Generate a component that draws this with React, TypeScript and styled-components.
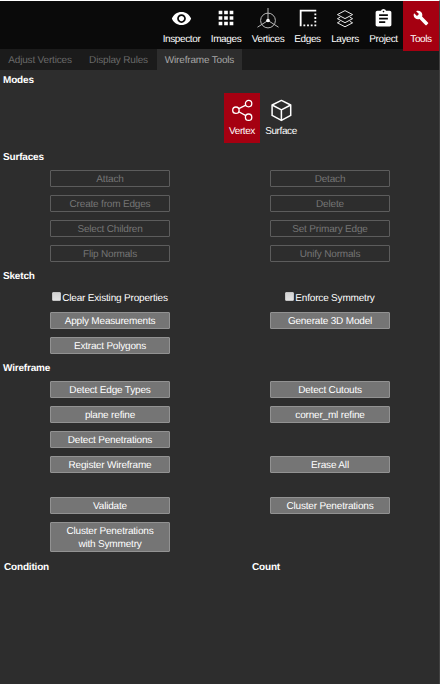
import React from 'react';
import styled, { createGlobalStyle } from 'styled-components';
import { MdVisibility, MdApps, MdBorderStyle, MdAssignment, MdBuild } from 'react-icons/md';

const GlobalStyle = createGlobalStyle`
  * { box-sizing: border-box; }
  body {
    margin: 0;
    background: #2d2d2d;
    font-family: "Liberation Sans", Arial, sans-serif;
    font-size: 10px;
    letter-spacing: -0.18px;
    color: #fff;
    text-rendering: geometricPrecision;
  }
`;

const Panel = styled.div`
  width: 440px;
  height: 684px;
  overflow: hidden;
  background: #2d2d2d;
  border-top: 1px solid #fff;
  border-right: 1px solid #414141;
`;

const NavBar = styled.nav`
  display: flex;
  justify-content: flex-end;
  height: 48px;
  background: #0a0a0a;
`;

const NavItem = styled.div<{ $width: number; $active?: boolean }>`
  display: flex;
  flex-direction: column;
  align-items: center;
  width: ${p => p.$width}px;
  height: ${p => (p.$active ? 50 : 48)}px;
  background: ${p => (p.$active ? '#a50011' : 'transparent')};
  z-index: 1;
`;

const NavIcon = styled.div`
  display: flex;
  align-items: center;
  justify-content: center;
  height: 24px;
  margin-top: 5px;
`;

const NavLabel = styled.span`
  margin-top: 3px;
  line-height: 13px;
  white-space: nowrap;
  letter-spacing: -0.38px;
`;

const TabBar = styled.div`
  display: flex;
  height: 21px;
  background: #1b1b1b;
`;

const Tab = styled.div<{ $width: number; $active?: boolean }>`
  width: ${p => p.$width}px;
  height: 21px;
  line-height: 23px;
  text-align: center;
  white-space: nowrap;
  color: ${p => (p.$active ? '#a6a6a6' : '#696969')};
  background: ${p => (p.$active ? '#2d2d2d' : 'transparent')};
`;

const Heading = styled.h2`
  height: 19px;
  margin: 0;
  padding-left: 3px;
  font-size: 10px;
  line-height: 21px;
  font-weight: bold;
`;

const Modes = styled.div`
  display: flex;
  gap: 3px;
  height: 58px;
  padding: 4px 0 4px 224px;
`;

const Mode = styled.div<{ $active?: boolean }>`
  display: flex;
  flex-direction: column;
  align-items: center;
  width: 36px;
  height: 50px;
  padding-top: 5px;
  background: ${p => (p.$active ? '#a50011' : 'transparent')};
`;

const ModeLabel = styled.span`
  margin-top: 3px;
  line-height: 13px;
  letter-spacing: -0.4px;
`;

const Grid = styled.div<{ $gapTop?: number }>`
  display: grid;
  grid-template-columns: 220px 220px;
  width: 440px;
  padding-top: ${p => p.$gapTop ?? 0}px;
`;

const Cell = styled.div`
  display: flex;
  justify-content: center;
  min-height: 25px;
  padding: 4px 0;
`;

const Button = styled.button<{ $tall?: boolean }>`
  width: 120px;
  height: ${p => (p.$tall ? 30 : 17)}px;
  margin: 0;
  padding: ${p => (p.$tall ? 1 : 2)}px 10px 0;
  border: 1px solid #929292;
  border-radius: 1px;
  background: #757575;
  color: #fff;
  font: 10px "Liberation Sans", Arial, sans-serif;
  letter-spacing: -0.18px;
  line-height: 13px;
  white-space: ${p => (p.$tall ? 'normal' : 'nowrap')};
  text-rendering: geometricPrecision;

  &:disabled {
    border-color: #5c5c5c;
    background: transparent;
    color: #757575;
  }
`;

const CheckLabel = styled.label`
  display: flex;
  justify-content: center;
  height: 23px;
  padding-top: 6px;
  line-height: 15px;
`;

const CheckBox = styled.input`
  appearance: none;
  width: 9px;
  height: 9px;
  margin: 1px 1px 0 0;
  border: 1px solid #c4c4c4;
  border-radius: 1px;
  background: linear-gradient(#d2d2d2, #e2e2e2);
`;

const TableHead = styled.div`
  display: grid;
  grid-template-columns: 248px 1fr;
  padding: 1px 0 0 1px;
`;

const VerticesIcon = () => (
  <svg width="24" height="24" viewBox="0 0 24 24" fill="none" stroke="#b8b8b8" strokeWidth="1">
    <circle cx="12" cy="14.5" r="7.4" />
    <path d="M12 2v12.5L1.5 21.2M12 14.5l10.5 6.7" />
    <circle cx="12" cy="14.5" r="1.8" fill="#fff" stroke="none" />
  </svg>
);

const LayersIcon = () => (
  <svg width="20" height="20" viewBox="0 0 20 20" fill="none" stroke="#e8e8e8" strokeWidth="1">
    <path d="M10 2.6l7.6 4-7.6 4-7.6-4z" />
    <path d="M5.2 9.2L2.4 10.7l7.6 4 7.6-4-2.8-1.5" />
    <path d="M5.2 13.3l-2.8 1.5 7.6 4 7.6-4-2.8-1.5" />
  </svg>
);

const VertexIcon = () => (
  <svg width="24" height="24" viewBox="0 0 24 24" fill="none" stroke="#fff" strokeWidth="1.3">
    <circle cx="5.9" cy="12.2" r="3.2" />
    <circle cx="18.6" cy="5.6" r="3.2" />
    <circle cx="18.6" cy="19.2" r="3.2" />
    <path d="M8.8 10.7l7-3.6M8.8 13.8l7 3.8" />
  </svg>
);

const SurfaceIcon = () => (
  <svg width="24" height="24" viewBox="0 0 24 24" fill="none" stroke="#fff" strokeWidth="1.5" strokeLinejoin="round">
    <path d="M12.4 2.4l9.3 4.6v10.4l-9.3 5-9.3-5V7z" />
    <path d="M3.1 7l9.3 4.9L21.7 7M12.4 11.9v10.5" />
  </svg>
);

const navItems = [
  { label: 'Inspector', width: 47, icon: <MdVisibility size={21} /> },
  { label: 'Images', width: 42, icon: <MdApps size={22} /> },
  { label: 'Vertices', width: 42, icon: <VerticesIcon /> },
  { label: 'Edges', width: 37, icon: <MdBorderStyle size={22} /> },
  { label: 'Layers', width: 38, icon: <LayersIcon /> },
  { label: 'Project', width: 39, icon: <MdAssignment size={21} /> },
  { label: 'Tools', width: 36, icon: <MdBuild size={16} />, active: true },
];

const surfaceActions = [
  'Attach', 'Detach',
  'Create from Edges', 'Delete',
  'Select Children', 'Set Primary Edge',
  'Flip Normals', 'Unify Normals',
];
const sketchActions = ['Apply Measurements', 'Generate 3D Model', 'Extract Polygons', ''];
const wireframeActions = [
  'Detect Edge Types', 'Detect Cutouts',
  'plane refine', 'corner_ml refine',
  'Detect Penetrations', '',
  'Register Wireframe', 'Erase All',
];
const validateActions = ['Validate', 'Cluster Penetrations', 'Cluster Penetrations with Symmetry', ''];

const Actions = ({ items, disabled, gapTop }: { items: string[]; disabled?: boolean; gapTop?: number }) => (
  <Grid $gapTop={gapTop}>
    {items.map((text, i) => (
      <Cell key={i}>
        {text && <Button disabled={disabled} $tall={text.length > 24}>{text}</Button>}
      </Cell>
    ))}
  </Grid>
);

export default function App() {
  return (
    <>
      <GlobalStyle />
      <Panel>
        <NavBar>
          {navItems.map(item => (
            <NavItem key={item.label} $width={item.width} $active={item.active}>
              <NavIcon>{item.icon}</NavIcon>
              <NavLabel>{item.label}</NavLabel>
            </NavItem>
          ))}
        </NavBar>
        <TabBar>
          <Tab $width={80}>Adjust Vertices</Tab>
          <Tab $width={77}>Display Rules</Tab>
          <Tab $width={85} $active>Wireframe Tools</Tab>
        </TabBar>
        <Heading>Modes</Heading>
        <Modes>
          <Mode $active>
            <VertexIcon />
            <ModeLabel>Vertex</ModeLabel>
          </Mode>
          <Mode>
            <SurfaceIcon />
            <ModeLabel>Surface</ModeLabel>
          </Mode>
        </Modes>
        <Heading>Surfaces</Heading>
        <Actions items={surfaceActions} disabled />
        <Heading>Sketch</Heading>
        <Grid>
          <CheckLabel><CheckBox type="checkbox" />Clear Existing Properties</CheckLabel>
          <CheckLabel><CheckBox type="checkbox" />Enforce Symmetry</CheckLabel>
        </Grid>
        <Actions items={sketchActions} />
        <Heading>Wireframe</Heading>
        <Actions items={wireframeActions} />
        <Actions items={validateActions} gapTop={16} />
        <TableHead>
          <Heading>Condition</Heading>
          <Heading>Count</Heading>
        </TableHead>
      </Panel>
    </>
  );
}
